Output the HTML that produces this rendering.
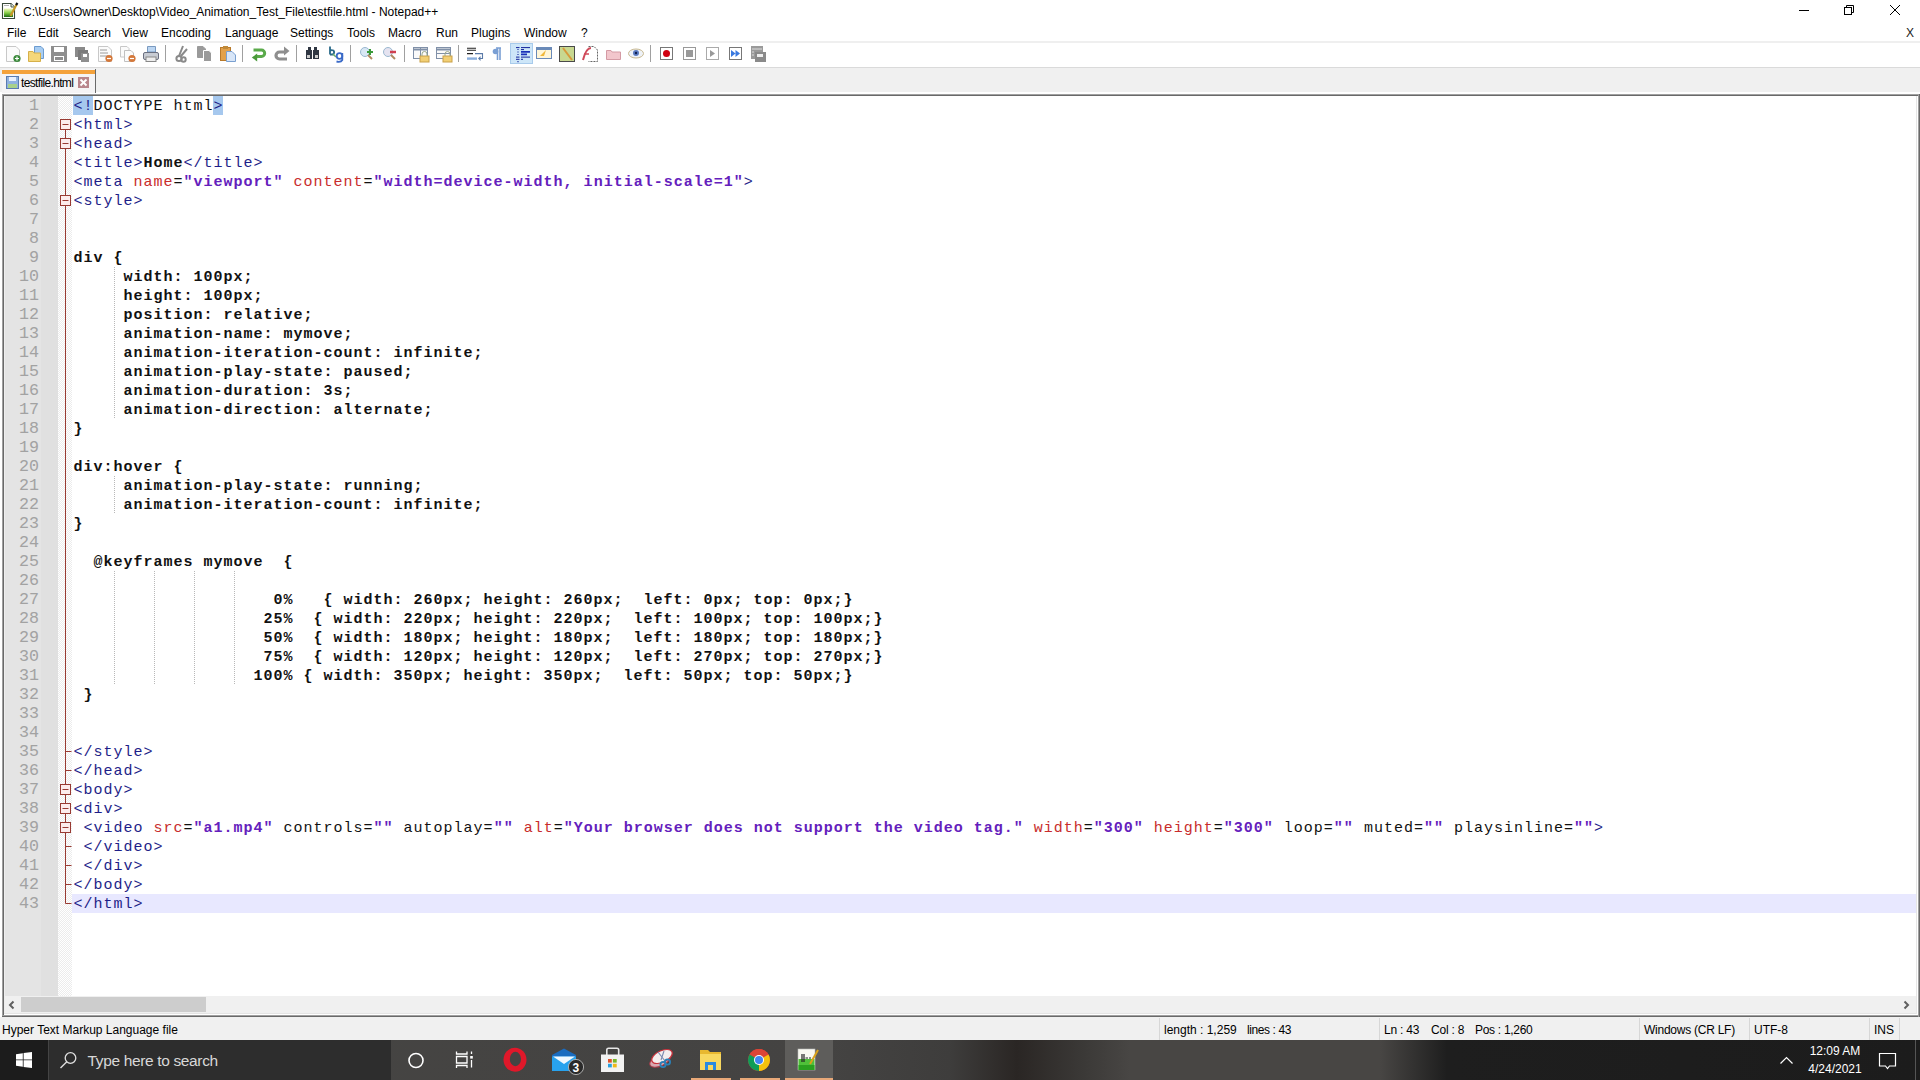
<!DOCTYPE html>
<html><head><meta charset="utf-8"><title>Notepad++</title>
<style>
*{margin:0;padding:0;box-sizing:border-box}
html,body{width:1920px;height:1080px;overflow:hidden;background:#fff;position:relative;font-family:"Liberation Sans",sans-serif}
.abs{position:absolute}
#title{position:absolute;left:23px;top:4px;font-size:12px;line-height:16px;color:#000;white-space:pre}
.mi{position:absolute;top:25px;font-size:12px;line-height:16px;color:#000;white-space:pre}
#menuline{position:absolute;left:0;top:41px;width:1920px;height:2px;background:#efefef}
#tbline{position:absolute;left:0;top:67px;width:1920px;height:1px;background:#dadada}
#tabbar{position:absolute;left:0;top:68px;width:1920px;height:24px;background:#f0f0f0}
.tsep{position:absolute;top:45px;width:1px;height:17px;background:#a0a0a0}
#editor{position:absolute;left:2px;top:94px;width:1917px;height:922px;border-top:2px solid #696969;border-left:2px solid #696969;border-bottom:2px solid #696969;border-right:1px solid #c8c8c8;background:#fff}
#lnm{position:absolute;left:5px;top:96px;width:36px;height:900px;background:#e4e4e4}
#symm{position:absolute;left:41px;top:96px;width:17px;height:900px;background:#e0e0e0}
#foldm{position:absolute;left:58px;top:96px;width:14px;height:900px;background-color:#fbfbfb;background-image:repeating-conic-gradient(#ececec 0 25%, #ffffff 0 50%);background-size:2px 2px}
#curline{position:absolute;left:72px;top:894px;width:1844px;height:19px;background:#e8e8ff}
.ln{position:absolute;left:73.5px;height:19px;line-height:19px;padding-top:1px;font-family:"Liberation Mono",monospace;font-size:15px;letter-spacing:1px;white-space:pre;color:#000}
.num{position:absolute;left:5px;width:34px;text-align:right;height:19px;line-height:19px;font-family:"Liberation Mono",monospace;font-size:16.6667px;color:#a2a2a2}
.ln i{font-style:normal}
.t{color:#1e1e88}
.a{color:#c82c2c}
.v{color:#6420bc;font-weight:bold}
.k{color:#111}
.b{color:#111;font-weight:bold}
.h{color:#1e1e88}
.hl{position:absolute;top:96px;height:19px;background:#a6c8ee}
.ig{position:absolute;width:1px;background-image:linear-gradient(#b8b8b8 50%,transparent 50%);background-size:1px 2px}
#hscroll{position:absolute;left:5px;top:996px;width:1911px;height:17px;background:#f0f0f0}
#hthumb{position:absolute;left:21px;top:997px;width:185px;height:15px;background:#cdcdcd}
#status{position:absolute;left:0;top:1017px;width:1920px;height:23px;background:#f0f0f0}
.st{position:absolute;top:1022px;font-size:12px;line-height:16px;color:#000;white-space:pre}
.ssep{position:absolute;top:1018px;width:1px;height:22px;background:#d7d7d7}
</style></head><body>
<svg class="abs" style="left:0;top:0" width="20" height="22" viewBox="0 0 20 22">
 <defs><linearGradient id="ig" x1="0" y1="0" x2="0" y2="1"><stop offset="0" stop-color="#f4f8c0"/><stop offset="0.5" stop-color="#8ad04a"/><stop offset="1" stop-color="#1a6a10"/></linearGradient></defs>
 <path d="M2.5 3.5 H11 L14.5 7 V18.5 H2.5 Z" fill="#fff" stroke="#3a4a3a" stroke-width="1.1"/>
 <path d="M11 3.5 V7 H14.5" fill="#e8eee8" stroke="#3a4a3a" stroke-width="0.9"/>
 <path d="M4.5 5.5 H9" stroke="#555" stroke-width="0.9" stroke-dasharray="1 1"/>
 <rect x="4" y="8.5" width="9" height="8.5" fill="url(#ig)"/>
 <path d="M10.5 16 L16.5 4.5" stroke="#c89a28" stroke-width="2.2"/>
 <path d="M16 5 L17.5 3" stroke="#111" stroke-width="2.2"/>
</svg>
<div id="title">C:\Users\Owner\Desktop\Video_Animation_Test_File\testfile.html - Notepad++</div>
<svg class="abs" style="left:1790px;top:0" width="130" height="42" viewBox="0 0 130 42">
 <line x1="9" y1="10.5" x2="19" y2="10.5" stroke="#000" stroke-width="1"/>
 <rect x="54.5" y="7.5" width="7" height="7" fill="none" stroke="#000"/>
 <path d="M56.5 7 V5.5 H63.5 V12.5 H62" fill="none" stroke="#000"/>
 <line x1="100" y1="5" x2="110" y2="15" stroke="#000" stroke-width="1"/>
 <line x1="110" y1="5" x2="100" y2="15" stroke="#000" stroke-width="1"/>
</svg>
<div class="abs" style="left:1906px;top:25px;font-size:12px;line-height:16px;color:#222">X</div>
<span class="mi" style="left:7px">File</span><span class="mi" style="left:38px">Edit</span><span class="mi" style="left:73px">Search</span><span class="mi" style="left:122px">View</span><span class="mi" style="left:161px">Encoding</span><span class="mi" style="left:225px">Language</span><span class="mi" style="left:290px">Settings</span><span class="mi" style="left:347px">Tools</span><span class="mi" style="left:388px">Macro</span><span class="mi" style="left:436px">Run</span><span class="mi" style="left:471px">Plugins</span><span class="mi" style="left:524px">Window</span><span class="mi" style="left:581px">?</span>
<div id="menuline"></div>
<svg class="abs" style="left:0;top:40px" width="780" height="28" viewBox="0 40 780 28">
 <!-- new -->
 <path d="M6.5 46.5 H16 L19.5 50 V61.5 H6.5 Z" fill="#fbfbfb" stroke="#c8c8c8"/>
 <circle cx="17" cy="58.5" r="3.6" fill="#3c8a3c"/><path d="M15 58.5 H19 M17 56.5 V60.5" stroke="#fff" stroke-width="1.2"/>
 <!-- open -->
 <path d="M34.5 46.5 H41 L43.5 49 V58.5 H34.5 Z" fill="#a8cdf2" stroke="#6b9bd0"/>
 <path d="M28.5 51.5 H33 L34 53 H40.5 V61.5 H28.5 Z" fill="#f5d77a" stroke="#d6b04a"/>
 <!-- save -->
 <rect x="51" y="46" width="16" height="16" fill="#8e8e8e"/><rect x="54" y="47" width="10" height="5" fill="#fff"/><rect x="54" y="56" width="10" height="5" fill="#fff"/><rect x="55" y="57" width="8" height="3" fill="#8e8e8e"/>
 <!-- save all -->
 <rect x="75" y="47" width="10" height="10" fill="#8a8a8a"/><rect x="78" y="50" width="10" height="10" fill="#7a7a7a"/><rect x="81" y="53" width="8" height="9" fill="#8e8e8e"/><rect x="83" y="54" width="4" height="3" fill="#fff"/>
 <!-- close -->
 <path d="M98.5 46.5 H108 L111.5 50 V61.5 H98.5 Z" fill="#fbfbfb" stroke="#c8c8c8"/><path d="M100 50 H107 M100 53 H108 M100 56 H108" stroke="#9a9a9a"/>
 <circle cx="109" cy="58.5" r="3.6" fill="#d4783a"/><path d="M107 58.5 H111" stroke="#fff" stroke-width="1.2"/>
 <!-- close all -->
 <path d="M120.5 46.5 H127 L129 48.5 V57 H120.5 Z" fill="#fbfbfb" stroke="#c8c8c8"/><path d="M124.5 50.5 H131 L133.5 53 V61.5 H124.5 Z" fill="#fbfbfb" stroke="#c0c0c0"/>
 <circle cx="132" cy="58.5" r="3.6" fill="#d4783a"/><path d="M130 58.5 H134" stroke="#fff" stroke-width="1.2"/>
 <!-- print -->
 <path d="M147.5 46.5 H155.5 V52 H147.5 Z" fill="#bcd6f2" stroke="#7a9ac0"/>
 <rect x="143.5" y="52.5" width="15" height="7" rx="1.5" fill="#c8ccd4" stroke="#6a6f80"/><rect x="146" y="57" width="10" height="4.5" fill="#eee" stroke="#888"/>
 <!-- cut -->
 <path d="M183 46 L179 56 M187 49 L181 56" stroke="#8a8a8a" stroke-width="2"/><circle cx="179" cy="58.5" r="2.6" fill="none" stroke="#8a8a8a" stroke-width="2"/><circle cx="183.5" cy="59.5" r="2.2" fill="none" stroke="#8a8a8a" stroke-width="2"/>
 <!-- copy -->
 <path d="M197.5 46.5 H203 L205.5 49 V57.5 H197.5 Z" fill="#9a9a9a" stroke="#9a9a9a"/><path d="M203.5 50.5 H209 L211.5 53 V61.5 H203.5 Z" fill="#9a9a9a" stroke="#fff"/>
 <!-- paste -->
 <rect x="220.5" y="47.5" width="10" height="13" fill="#e3a14a" stroke="#b8792a"/><rect x="223" y="46" width="5" height="3" fill="#c08a3a"/>
 <path d="M226.5 51.5 H232 L235.5 55 V61.5 H226.5 Z" fill="#d8e6f8" stroke="#7aa0d0"/>
 <!-- undo -->
 <path d="M253.5 50 H261.5 A3.2 3.2 0 0 1 261.5 56.4 H256.5" fill="none" stroke="#5aaa4a" stroke-width="3"/><path d="M251.8 57.5 L257.2 53.5 V61.5 Z" fill="#4a9a3a"/>
 <!-- redo -->
 <path d="M287 59 H279.5 A3.5 3.5 0 0 1 279.5 52 H284.5" fill="none" stroke="#8e8e8e" stroke-width="3.2"/><path d="M289.5 51 L284 46.5 V55.5 Z" fill="#8e8e8e"/>
 <!-- find -->
 <rect x="306" y="50" width="6" height="9" fill="#2f3642"/><rect x="313" y="50" width="6" height="9" fill="#2f3642"/><rect x="308" y="47" width="3" height="4" fill="#2f3642"/><rect x="314" y="47" width="3" height="4" fill="#2f3642"/><rect x="307" y="55" width="3" height="3" fill="#ccc"/><rect x="315" y="55" width="3" height="3" fill="#ccc"/>
 <!-- replace -->
 <path d="M330 46.5 V54.5 M330 51 Q331 49.5 333.5 50.5 Q335 52.5 333 54.5 H330" fill="none" stroke="#2a6a8a" stroke-width="1.8"/>
 <path d="M333 54 L336 57" stroke="#6ab06a" stroke-width="1.5"/>
 <circle cx="339.5" cy="56" r="2.8" fill="none" stroke="#3a6ac8" stroke-width="1.8"/><path d="M342.3 53 V60 Q341 62.5 336.5 61.5" fill="none" stroke="#3a6ac8" stroke-width="1.8"/>
 <!-- zoom in -->
 <circle cx="365" cy="52" r="4.5" fill="#d8e8f5" stroke="#9ab8d0"/><path d="M368 55 L372 59" stroke="#b08a60" stroke-width="2"/><path d="M367 52 H373 M370 49 V55" stroke="#3a9a3a" stroke-width="2"/>
 <!-- zoom out -->
 <circle cx="388" cy="52" r="4.5" fill="#e5e3f0" stroke="#9ab8d0"/><path d="M391 55 L395 59" stroke="#b08a60" stroke-width="2"/><path d="M390 52 H396" stroke="#d04050" stroke-width="2.5"/>
 <!-- sync v -->
 <rect x="413.5" y="47.5" width="14" height="11" fill="#fafafa" stroke="#8090a8"/><path d="M414 49.5 H427" stroke="#8090a8" stroke-width="2"/><path d="M420.5 48 V58" stroke="#8090a8"/>
 <rect x="420" y="56" width="9" height="6" fill="#f2cf74" stroke="#c9a048"/><path d="M422 56 V54 A2.5 2.5 0 0 1 427 54 V56" fill="none" stroke="#9aa88a"/>
 <!-- sync h -->
 <rect x="436.5" y="47.5" width="14" height="11" fill="#fafafa" stroke="#8090a8"/><path d="M437 49.5 H450" stroke="#8090a8" stroke-width="2"/><path d="M437 53.5 H450" stroke="#8090a8"/>
 <rect x="443" y="56" width="9" height="6" fill="#f2cf74" stroke="#c9a048"/><path d="M445 56 V54 A2.5 2.5 0 0 1 450 54 V56" fill="none" stroke="#9aa88a"/>
 <!-- wrap -->
 <path d="M467 48.3 H476 M467 50.3 H476 M467 53.6 H473" stroke="#222" stroke-width="1.1"/><path d="M475 53.6 H482.5 V58.5 H480" fill="none" stroke="#5a7aa8" stroke-width="1.1"/><path d="M480.5 56 L478 58.5 L480.5 61 Z" fill="#5a7aa8"/><path d="M467 58.6 H477" stroke="#8aaedc" stroke-width="2.4"/>
 <!-- pilcrow -->
 <path d="M496 48 H501 M497.5 48 V60 M500 48 V60" stroke="#7a9fd4" stroke-width="1.6"/><circle cx="495.5" cy="51.5" r="2.8" fill="#7a9fd4"/>
 <!-- indent guide active -->
 <rect x="510.5" y="43.5" width="22" height="20" fill="#cde6f8" stroke="#a8cbec"/>
 <path d="M516 47.6 H519.5 M521 47.6 H530 M521 49.6 H524 M516 57.1 H519.5 M521 57.1 H530 M516 59.3 H519.5 M521 59.3 H523" stroke="#10209a" stroke-width="1"/>
 <path d="M521 51.9 H530 M521 54.3 H527" stroke="#1a30b8" stroke-width="1.8"/>
 <path d="M518 49 V50 M518 51.5 V52.5 M518 54 V55 M518 61 V62.2" stroke="#10209a" stroke-width="1.1"/>
 <!-- udl -->
 <rect x="536.5" y="47.5" width="15" height="11" fill="#fff6d8" stroke="#6a8ab8"/><path d="M537 49 H551" stroke="#6a8ab8" stroke-width="2"/><path d="M540 56 L546 50 L544 56 Z" fill="#f0b83a"/>
 <!-- doc map -->
 <rect x="559.5" y="46.5" width="15" height="15" fill="#c8d890" stroke="#4a4a4a"/><path d="M563 48 L572 60" stroke="#d89a3a" stroke-width="2"/>
 <!-- function list -->
 <path d="M588.5 46.5 H594 L597.5 50 V61.5 H588.5" fill="none" stroke="#666" stroke-dasharray="2 1"/><path d="M583 60 Q586 48 591 48" fill="none" stroke="#d04a5a" stroke-width="2"/><path d="M584 54 H589" stroke="#d04a5a" stroke-width="1.5"/>
 <!-- folder as workspace -->
 <path d="M606.5 50.5 H611 L612 52 H620.5 V59.5 H606.5 Z" fill="#f2c6cc" stroke="#d49aa4"/>
 <!-- monitoring eye -->
 <ellipse cx="636" cy="53.5" rx="7.5" ry="4.5" fill="#eef2f8" stroke="#c8b890"/><circle cx="636" cy="53" r="3" fill="#5a7ac0"/><circle cx="636" cy="53" r="1.2" fill="#102050"/>
 <!-- record -->
 <rect x="660.5" y="47.5" width="12" height="12" fill="#fff" stroke="#777"/><circle cx="666.5" cy="53.5" r="3.5" fill="#d00010"/>
 <!-- stop -->
 <rect x="683.5" y="47.5" width="12" height="12" fill="#fff" stroke="#999"/><rect x="686" y="50" width="7" height="7" fill="#999"/>
 <!-- play -->
 <rect x="706.5" y="47.5" width="12" height="12" fill="#fff" stroke="#aaa"/><path d="M710 50 L715 53.5 L710 57 Z" fill="#999"/>
 <!-- play multi -->
 <rect x="729.5" y="47.5" width="12" height="12" fill="#fff" stroke="#777"/><path d="M731 50 L735.5 53.5 L731 57 Z M735.5 50 L740 53.5 L735.5 57 Z" fill="#3a7ae0"/>
 <!-- save macro -->
 <rect x="751" y="46" width="12" height="13" fill="#9a9a9a"/><rect x="755" y="52" width="11" height="10" fill="#8a8a8a"/><path d="M752 49 H762 M752 52 H754 M752 55 H754" stroke="#ddd"/><rect x="757" y="54" width="6" height="3" fill="#eee"/>
</svg>
<div class="tsep" style="left:165px"></div><div class="tsep" style="left:242px"></div><div class="tsep" style="left:296px"></div><div class="tsep" style="left:350px"></div><div class="tsep" style="left:404px"></div><div class="tsep" style="left:458px"></div><div class="tsep" style="left:650px"></div>
<div id="tbline"></div>
<div id="tabbar"></div>
<div class="abs" style="left:2px;top:69px;width:94px;height:24px;background:#f5f4f5;border-right:1.5px solid #6a6a6a"></div>
<div class="abs" style="left:2px;top:70px;width:92.5px;height:4px;background:#f4a23c"></div>
<svg class="abs" style="left:6px;top:76px" width="13" height="13" viewBox="0 0 13 13">
 <rect x="0.5" y="0.5" width="12" height="12" fill="#8fb1e0" stroke="#5a7bb0"/>
 <rect x="3" y="1" width="7" height="4" fill="#e8f0ff"/>
 <rect x="2" y="8" width="9" height="4" fill="#a8d08a"/>
</svg>
<div class="abs" style="left:21px;top:75px;font-size:12px;line-height:16px;letter-spacing:-0.65px;color:#000">testfile.html</div>
<svg class="abs" style="left:78px;top:77px" width="11" height="11" viewBox="0 0 11 11">
 <rect x="0" y="0" width="11" height="11" fill="#b9868c"/>
 <line x1="2.5" y1="2.5" x2="8.5" y2="8.5" stroke="#fff" stroke-width="2"/>
 <line x1="8.5" y1="2.5" x2="2.5" y2="8.5" stroke="#fff" stroke-width="2"/>
</svg>
<div class="abs" style="left:2px;top:94px;width:1918px;height:1px;background:#a0a0a0"></div>
<div class="abs" style="left:3px;top:95px;width:1916px;height:1px;background:#696969"></div>
<div class="abs" style="left:2px;top:94px;width:1px;height:923px;background:#a0a0a0"></div>
<div class="abs" style="left:3px;top:95px;width:1px;height:922px;background:#696969"></div>
<div class="abs" style="left:4px;top:96px;width:1px;height:918px;background:#eeeeee"></div>
<div class="abs" style="left:2px;top:1015px;width:1918px;height:1px;background:#a0a0a0"></div>
<div class="abs" style="left:2px;top:1016px;width:1918px;height:1px;background:#696969"></div>
<div class="abs" style="left:4px;top:1013px;width:1913px;height:1px;background:#e4e4e4"></div>
<div class="abs" style="left:1916px;top:96px;width:1px;height:918px;background:#e6e6e6"></div>
<div class="abs" style="left:1918px;top:94px;width:1px;height:923px;background:#a0a0a0"></div>
<div class="abs" style="left:1919px;top:94px;width:1px;height:923px;background:#696969"></div>
<div id="lnm"></div><div id="symm"></div><div id="foldm"></div>
<div id="curline"></div>
<div class="hl" style="left:73px;width:20px"></div><div class="hl" style="left:213px;width:10px"></div>
<div class="ig" style="left:114px;top:267px;height:152px"></div><div class="ig" style="left:114px;top:476px;height:38px"></div><div class="ig" style="left:114px;top:571px;height:114px"></div><div class="ig" style="left:154px;top:571px;height:114px"></div><div class="ig" style="left:194px;top:571px;height:114px"></div><div class="ig" style="left:234px;top:571px;height:114px"></div><div class="ln" style="top:96px"><i class="h">&lt;!</i><i class="k">DOCTYPE html</i><i class="h">&gt;</i></div><div class="num" style="top:96px">1</div><div class="ln" style="top:115px"><i class="t">&lt;html&gt;</i></div><div class="num" style="top:115px">2</div><div class="ln" style="top:134px"><i class="t">&lt;head&gt;</i></div><div class="num" style="top:134px">3</div><div class="ln" style="top:153px"><i class="t">&lt;title&gt;</i><i class="b">Home</i><i class="t">&lt;/title&gt;</i></div><div class="num" style="top:153px">4</div><div class="ln" style="top:172px"><i class="t">&lt;meta</i><i class="a"> name</i><i class="k">=</i><i class="v">&quot;viewport&quot;</i><i class="a"> content</i><i class="k">=</i><i class="v">&quot;width=device-width, initial-scale=1&quot;</i><i class="t">&gt;</i></div><div class="num" style="top:172px">5</div><div class="ln" style="top:191px"><i class="t">&lt;style&gt;</i></div><div class="num" style="top:191px">6</div><div class="ln" style="top:210px"></div><div class="num" style="top:210px">7</div><div class="ln" style="top:229px"></div><div class="num" style="top:229px">8</div><div class="ln" style="top:248px"><i class="b">div {</i></div><div class="num" style="top:248px">9</div><div class="ln" style="top:267px"><i class="b">     width: 100px;</i></div><div class="num" style="top:267px">10</div><div class="ln" style="top:286px"><i class="b">     height: 100px;</i></div><div class="num" style="top:286px">11</div><div class="ln" style="top:305px"><i class="b">     position: relative;</i></div><div class="num" style="top:305px">12</div><div class="ln" style="top:324px"><i class="b">     animation-name: mymove;</i></div><div class="num" style="top:324px">13</div><div class="ln" style="top:343px"><i class="b">     animation-iteration-count: infinite;</i></div><div class="num" style="top:343px">14</div><div class="ln" style="top:362px"><i class="b">     animation-play-state: paused;</i></div><div class="num" style="top:362px">15</div><div class="ln" style="top:381px"><i class="b">     animation-duration: 3s;</i></div><div class="num" style="top:381px">16</div><div class="ln" style="top:400px"><i class="b">     animation-direction: alternate;</i></div><div class="num" style="top:400px">17</div><div class="ln" style="top:419px"><i class="b">}</i></div><div class="num" style="top:419px">18</div><div class="ln" style="top:438px"></div><div class="num" style="top:438px">19</div><div class="ln" style="top:457px"><i class="b">div:hover {</i></div><div class="num" style="top:457px">20</div><div class="ln" style="top:476px"><i class="b">     animation-play-state: running;</i></div><div class="num" style="top:476px">21</div><div class="ln" style="top:495px"><i class="b">     animation-iteration-count: infinite;</i></div><div class="num" style="top:495px">22</div><div class="ln" style="top:514px"><i class="b">}</i></div><div class="num" style="top:514px">23</div><div class="ln" style="top:533px"></div><div class="num" style="top:533px">24</div><div class="ln" style="top:552px"><i class="b">  @keyframes mymove  {</i></div><div class="num" style="top:552px">25</div><div class="ln" style="top:571px"></div><div class="num" style="top:571px">26</div><div class="ln" style="top:590px"><i class="b">                    0%   { width: 260px; height: 260px;  left: 0px; top: 0px;}</i></div><div class="num" style="top:590px">27</div><div class="ln" style="top:609px"><i class="b">                   25%  { width: 220px; height: 220px;  left: 100px; top: 100px;}</i></div><div class="num" style="top:609px">28</div><div class="ln" style="top:628px"><i class="b">                   50%  { width: 180px; height: 180px;  left: 180px; top: 180px;}</i></div><div class="num" style="top:628px">29</div><div class="ln" style="top:647px"><i class="b">                   75%  { width: 120px; height: 120px;  left: 270px; top: 270px;}</i></div><div class="num" style="top:647px">30</div><div class="ln" style="top:666px"><i class="b">                  100% { width: 350px; height: 350px;  left: 50px; top: 50px;}</i></div><div class="num" style="top:666px">31</div><div class="ln" style="top:685px"><i class="b"> }</i></div><div class="num" style="top:685px">32</div><div class="ln" style="top:704px"></div><div class="num" style="top:704px">33</div><div class="ln" style="top:723px"></div><div class="num" style="top:723px">34</div><div class="ln" style="top:742px"><i class="t">&lt;/style&gt;</i></div><div class="num" style="top:742px">35</div><div class="ln" style="top:761px"><i class="t">&lt;/head&gt;</i></div><div class="num" style="top:761px">36</div><div class="ln" style="top:780px"><i class="t">&lt;body&gt;</i></div><div class="num" style="top:780px">37</div><div class="ln" style="top:799px"><i class="t">&lt;div&gt;</i></div><div class="num" style="top:799px">38</div><div class="ln" style="top:818px"><i class="k"> </i><i class="t">&lt;video</i><i class="a"> src</i><i class="k">=</i><i class="v">&quot;a1.mp4&quot;</i><i class="k"> controls=</i><i class="v">&quot;&quot;</i><i class="k"> autoplay=</i><i class="v">&quot;&quot;</i><i class="a"> alt</i><i class="k">=</i><i class="v">&quot;Your browser does not support the video tag.&quot;</i><i class="a"> width</i><i class="k">=</i><i class="v">&quot;300&quot;</i><i class="a"> height</i><i class="k">=</i><i class="v">&quot;300&quot;</i><i class="k"> loop=</i><i class="v">&quot;&quot;</i><i class="k"> muted=</i><i class="v">&quot;&quot;</i><i class="k"> playsinline=</i><i class="v">&quot;&quot;</i><i class="t">&gt;</i></div><div class="num" style="top:818px">39</div><div class="ln" style="top:837px"><i class="k"> </i><i class="t">&lt;/video&gt;</i></div><div class="num" style="top:837px">40</div><div class="ln" style="top:856px"><i class="k"> </i><i class="t">&lt;/div&gt;</i></div><div class="num" style="top:856px">41</div><div class="ln" style="top:875px"><i class="t">&lt;/body&gt;</i></div><div class="num" style="top:875px">42</div><div class="ln" style="top:894px"><i class="t">&lt;/html&gt;</i></div><div class="num" style="top:894px">43</div><svg class="fold" width="20" height="1080" viewBox="0 0 20 1080" style="position:absolute;left:55px;top:0"><line x1="10.5" y1="129.5" x2="10.5" y2="903.5" stroke="#983a32" stroke-width="1"/><line x1="10.5" y1="903.5" x2="16.5" y2="903.5" stroke="#983a32" stroke-width="1"/><line x1="10.5" y1="751.5" x2="16.5" y2="751.5" stroke="#983a32" stroke-width="1"/><line x1="10.5" y1="770.5" x2="16.5" y2="770.5" stroke="#983a32" stroke-width="1"/><line x1="10.5" y1="846.5" x2="16.5" y2="846.5" stroke="#983a32" stroke-width="1"/><line x1="10.5" y1="865.5" x2="16.5" y2="865.5" stroke="#983a32" stroke-width="1"/><line x1="10.5" y1="884.5" x2="16.5" y2="884.5" stroke="#983a32" stroke-width="1"/><rect x="5.5" y="119.5" width="10" height="10" fill="#fcecec" stroke="#983a32" stroke-width="1"/><line x1="7.5" y1="124.5" x2="13.5" y2="124.5" stroke="#983a32" stroke-width="1"/><rect x="5.5" y="138.5" width="10" height="10" fill="#fcecec" stroke="#983a32" stroke-width="1"/><line x1="7.5" y1="143.5" x2="13.5" y2="143.5" stroke="#983a32" stroke-width="1"/><rect x="5.5" y="195.5" width="10" height="10" fill="#fcecec" stroke="#983a32" stroke-width="1"/><line x1="7.5" y1="200.5" x2="13.5" y2="200.5" stroke="#983a32" stroke-width="1"/><rect x="5.5" y="784.5" width="10" height="10" fill="#fcecec" stroke="#983a32" stroke-width="1"/><line x1="7.5" y1="789.5" x2="13.5" y2="789.5" stroke="#983a32" stroke-width="1"/><rect x="5.5" y="803.5" width="10" height="10" fill="#fcecec" stroke="#983a32" stroke-width="1"/><line x1="7.5" y1="808.5" x2="13.5" y2="808.5" stroke="#983a32" stroke-width="1"/><rect x="5.5" y="822.5" width="10" height="10" fill="#fcecec" stroke="#983a32" stroke-width="1"/><line x1="7.5" y1="827.5" x2="13.5" y2="827.5" stroke="#983a32" stroke-width="1"/></svg>
<div id="hscroll"></div><div id="hthumb"></div>
<svg class="abs" style="left:6px;top:999px" width="12" height="12" viewBox="0 0 12 12"><path d="M7.5 2.5 L4 6 L7.5 9.5" fill="none" stroke="#606060" stroke-width="2"/></svg>
<svg class="abs" style="left:1900px;top:999px" width="12" height="12" viewBox="0 0 12 12"><path d="M4.5 2.5 L8 6 L4.5 9.5" fill="none" stroke="#606060" stroke-width="2"/></svg>
<div id="status"></div>
<div class="st" style="left:2px">Hyper Text Markup Language file</div>
<div class="ssep" style="left:1159px"></div>
<div class="st" style="left:1164px">length : 1,259</div><div class="st" style="left:1247px;letter-spacing:-0.4px">lines : 43</div>
<div class="ssep" style="left:1379px"></div>
<div class="st" style="left:1384px;letter-spacing:-0.2px">Ln : 43</div><div class="st" style="left:1431px;letter-spacing:-0.2px">Col : 8</div><div class="st" style="left:1475px;letter-spacing:-0.3px">Pos : 1,260</div>
<div class="ssep" style="left:1639px"></div>
<div class="st" style="left:1644px;letter-spacing:-0.25px">Windows (CR LF)</div>
<div class="ssep" style="left:1749px"></div>
<div class="st" style="left:1754px">UTF-8</div>
<div class="ssep" style="left:1869px"></div>
<div class="st" style="left:1874px">INS</div>
<div class="ssep" style="left:1899px"></div>
<div class="abs" style="left:0;top:1040px;width:1920px;height:40px;background:linear-gradient(90deg,#464543 0px,#444342 830px,#3e3d3c 950px,#2a2624 1017px,#3a3836 1080px,#484644 1130px,#484644 1380px,#1e1e1e 1447px,#1c1c1c 1920px)"></div>
<div class="abs" style="left:0;top:1040px;width:48px;height:40px;background:#1c1c1c"></div>
<div class="abs" style="left:48px;top:1040px;width:343px;height:40px;background:#2d2d2d;border-left:1px solid #444"></div>
<svg class="abs" style="left:16px;top:1052px" width="16" height="16" viewBox="0 0 16 16">
 <path d="M0 2.2 L6.8 1.2 V7.5 H0 Z M7.6 1.1 L16 0 V7.5 H7.6 Z M0 8.3 H6.8 V14.8 L0 13.8 Z M7.6 8.3 H16 V16 L7.6 14.9 Z" fill="#fff"/>
</svg>
<svg class="abs" style="left:58px;top:1050px" width="22" height="22" viewBox="0 0 22 22">
 <circle cx="12.5" cy="8" r="5.3" fill="none" stroke="#e0e0e0" stroke-width="1.3"/>
 <line x1="8.8" y1="11.8" x2="2.5" y2="18" stroke="#e0e0e0" stroke-width="1.4"/>
</svg>
<div class="abs" style="left:87.5px;top:1052px;font-size:15.5px;line-height:18px;letter-spacing:-0.35px;color:#d8d8d8;white-space:pre">Type here to search</div>
<svg class="abs" style="left:405px;top:1050px" width="22" height="22" viewBox="0 0 22 22"><circle cx="11" cy="10.5" r="7" fill="none" stroke="#fff" stroke-width="1.6"/></svg>
<svg class="abs" style="left:453px;top:1050px" width="22" height="22" viewBox="0 0 22 22">
 <path d="M3.5 1.5 V4 H14 V1.5 M3.5 18 V15.5 H14 V18 M3.5 6.5 H14 V13 H3.5 Z M18.5 1.5 V4 M18.5 10 V17.5" fill="none" stroke="#fff" stroke-width="1.3"/>
 <rect x="17.2" y="6" width="2.6" height="2.6" fill="#fff"/>
</svg>
<svg class="abs" style="left:503px;top:1047px" width="25" height="26" viewBox="0 0 25 26">
 <ellipse cx="12" cy="12.8" rx="11.5" ry="12" fill="#e0182a"/><ellipse cx="12.4" cy="12" rx="5.6" ry="7.2" fill="#454443"/>
</svg>
<svg class="abs" style="left:550px;top:1046px" width="36" height="32" viewBox="0 0 36 32">
 <path d="M2 9 L14 2.5 L26 9 V25 H2 Z" fill="#1a6cc0"/><path d="M2 10.5 H26 V25 H2 Z" fill="#28a2ee"/><path d="M3 10.5 L14 18 L25 10.5 Z" fill="#f0f8ff"/>
 <circle cx="26" cy="21" r="7.6" fill="#2a2a2a" stroke="#b8b8b8" stroke-width="0.9"/><text x="22.6" y="25.6" font-family="Liberation Sans" font-weight="bold" font-size="12" fill="#fff">3</text>
</svg>
<svg class="abs" style="left:600px;top:1046px" width="26" height="28" viewBox="0 0 26 28">
 <path d="M6.8 9 V4 Q6.8 2.3 8.5 2.3 H17 Q18.7 2.3 18.7 4 V9" fill="none" stroke="#e6e6e6" stroke-width="1.6"/>
 <rect x="1" y="8.5" width="23" height="17.5" fill="#f2f2f2"/>
 <rect x="8" y="13" width="3.8" height="3.6" fill="#e0522a"/><rect x="12.9" y="13" width="3.8" height="3.6" fill="#78b82a"/><rect x="8" y="17.8" width="3.8" height="3.6" fill="#28a0e0"/><rect x="12.9" y="17.8" width="3.8" height="3.6" fill="#f0b81a"/>
</svg>
<svg class="abs" style="left:646px;top:1046px" width="30" height="28" viewBox="0 0 30 28">
 <ellipse cx="14" cy="14.5" rx="11" ry="5.5" transform="rotate(-25 14 14.5)" fill="#d8a8b0" stroke="#a83a48" stroke-width="1"/>
 <ellipse cx="16" cy="10.5" rx="11" ry="5.8" transform="rotate(-25 16 10.5)" fill="#f4eeee" stroke="#c8303a" stroke-width="1.2"/>
 <path d="M12 6 L19 15 M18 5 L15 14" stroke="#7a8ab0" stroke-width="1.1"/>
 <circle cx="17" cy="18.5" r="2.6" fill="none" stroke="#2a80b8" stroke-width="1.8"/><circle cx="21.5" cy="16" r="2.6" fill="none" stroke="#2a80b8" stroke-width="1.8"/>
</svg>
<svg class="abs" style="left:699px;top:1049px" width="24" height="22" viewBox="0 0 24 22">
 <path d="M1 1 H9 L11 3 H22 V21 H1 Z" fill="#e8b830"/><rect x="1" y="5" width="21" height="16" fill="#f8d860"/><path d="M6 21 V13 H17 V21 H14 V16 H9 V21 Z" fill="#2a8ae0"/>
</svg>
<svg class="abs" style="left:747px;top:1048px" width="24" height="24" viewBox="0 0 24 24">
 <circle cx="12" cy="12" r="11" fill="#d94030"/><path d="M12 12 L2.5 6.5 A11 11 0 0 1 21.5 6.5 Z" fill="#db4437"/><path d="M12 12 L21.5 6.5 A11 11 0 0 1 12 23 Z" fill="#f4c20d"/><path d="M12 12 L12 23 A11 11 0 0 1 2.5 6.5 Z" fill="#0f9d58"/>
 <circle cx="12" cy="12" r="5" fill="#fff"/><circle cx="12" cy="12" r="4" fill="#4285f4"/>
</svg>
<div class="abs" style="left:785px;top:1040px;width:48px;height:40px;background:#5e5d5b"></div>
<svg class="abs" style="left:797px;top:1048px" width="24" height="24" viewBox="0 0 24 24">
 <rect x="1" y="1" width="17" height="21" fill="#f8f8f0" stroke="#bbb" stroke-width="0.6"/><rect x="1.5" y="11" width="16" height="11" fill="#4fc03a"/><rect x="1.5" y="17" width="16" height="5" fill="#2aa020"/>
 <path d="M5 6 V14 M7 6 V14 M8.5 10 H11 M12 10 H14" stroke="#222" stroke-width="1.2"/><line x1="13" y1="16" x2="21" y2="2" stroke="#d9a21b" stroke-width="2"/>
</svg>
<div class="abs" style="left:691px;top:1078px;width:40px;height:2px;background:#e8a878"></div>
<div class="abs" style="left:740px;top:1078px;width:40px;height:2px;background:#e8a878"></div>
<div class="abs" style="left:785px;top:1078px;width:48px;height:2px;background:#e8a878"></div>
<svg class="abs" style="left:1779px;top:1054px" width="16" height="12" viewBox="0 0 16 12"><path d="M1.5 9.5 L7.5 3.5 L13.5 9.5" fill="none" stroke="#fff" stroke-width="1.2"/></svg>
<div class="abs" style="left:1795px;top:1043px;width:80px;text-align:center;font-size:12px;line-height:16px;color:#fff;white-space:pre">12:09 AM</div><div class="abs" style="left:1795px;top:1061px;width:80px;text-align:center;font-size:12px;line-height:16px;color:#fff;white-space:pre">4/24/2021</div>
<svg class="abs" style="left:1877px;top:1050px" width="22" height="22" viewBox="0 0 22 22"><path d="M2.5 3.5 H18.5 V16 H12.5 L10.5 18.5 L8.5 16 H2.5 Z" fill="none" stroke="#fff" stroke-width="1.2"/></svg>
<div class="abs" style="left:1915px;top:1040px;width:1px;height:40px;background:#555"></div>

</body></html>
